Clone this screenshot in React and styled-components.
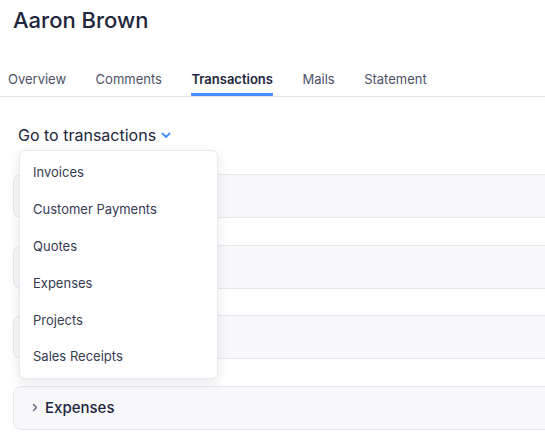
import React from "react";
import styled, { createGlobalStyle } from "styled-components";

const GlobalStyle = createGlobalStyle`
  body {
    margin: 0;
    overflow: hidden;
    background: #fff;
    font-family: Inter, "Noto Sans", sans-serif;
    color: #21263c;
  }
`;

const Page = styled.div`
  width: 545px;
  height: 440px;
  overflow: hidden;
`;

const Title = styled.h1`
  margin: 0;
  padding: 7px 13px 0;
  font-size: 22px;
  font-weight: 500;
  line-height: 26px;
  color: #21263c;
`;

const TabBar = styled.nav`
  display: flex;
  gap: 29.5px;
  margin-top: 38px;
  padding-left: 8px;
  border-bottom: 1px solid #dfe1e8;
`;

const Tab = styled.div`
  font-size: 13px;
  line-height: 16px;
  padding-bottom: 6px;
  color: ${(p) => (p.$active ? "#21263c" : "#4d5168")};
  font-weight: ${(p) => (p.$active ? 600 : 400)};
  border-bottom: 3px solid ${(p) => (p.$active ? "#408dfb" : "transparent")};
  border-radius: 1px;
`;

const Content = styled.section`
  padding: 28px 0 0 13px;
`;

const Picker = styled.div`
  position: relative;
  padding-left: 5px;
  height: 20px;
`;

const Trigger = styled.div`
  display: inline-flex;
  align-items: center;
  gap: 5px;
  font-size: 16px;
  line-height: 20px;
  color: #21263c;
`;

const Menu = styled.ul`
  position: absolute;
  top: 25px;
  left: 6px;
  z-index: 2;
  width: 199px;
  margin: 0;
  padding: 3px 0 3px;
  list-style: none;
  background: #fff;
  border: 1px solid #e9eaf0;
  border-radius: 6px;
  box-shadow: 0 4px 12px rgba(30, 34, 60, 0.1);
  box-sizing: border-box;
`;

const MenuItem = styled.li`
  height: 36.8px;
  display: flex;
  align-items: center;
  padding-left: 13px;
  font-size: 13px;
  color: #363b52;
`;

const Rows = styled.div`
  display: flex;
  flex-direction: column;
  gap: 26.5px;
  margin-top: 29px;
`;

const Row = styled.div`
  width: 560px;
  height: 44px;
  box-sizing: border-box;
  display: flex;
  align-items: center;
  gap: 7px;
  padding-left: 18px;
  background: #f9f9fb;
  border: 1px solid #e6e7ee;
  border-radius: 8px;
`;

const RowLabel = styled.span`
  font-size: 15px;
  font-weight: 500;
  color: #21263c;
`;

const ChevronDown = () => (
  <svg width="10" height="7" viewBox="0 0 10 7" fill="none">
    <path d="M1.5 1.5L5 5L8.5 1.5" stroke="#408dfb" strokeWidth="1.8" strokeLinecap="round" strokeLinejoin="round" />
  </svg>
);

const ChevronRight = () => (
  <svg width="6" height="9" viewBox="0 0 6 9" fill="none">
    <path d="M1.5 1.5L4.5 4.5L1.5 7.5" stroke="#6b6f83" strokeWidth="1.5" strokeLinecap="round" strokeLinejoin="round" />
  </svg>
);

const tabs = ["Overview", "Comments", "Transactions", "Mails", "Statement"];
const menu = ["Invoices", "Customer Payments", "Quotes", "Expenses", "Projects", "Sales Receipts"];
const sections = ["Invoices", "Customer Payments", "Quotes", "Expenses"];

export default function App() {
  return (
    <Page>
      <GlobalStyle />
      <Title>Aaron Brown</Title>
      <TabBar>
        {tabs.map((t) => (
          <Tab key={t} $active={t === "Transactions"}>
            {t}
          </Tab>
        ))}
      </TabBar>
      <Content>
        <Picker>
          <Trigger>
            Go to transactions <ChevronDown />
          </Trigger>
          <Menu>
            {menu.map((m) => (
              <MenuItem key={m}>{m}</MenuItem>
            ))}
          </Menu>
        </Picker>
        <Rows>
          {sections.map((s) => (
            <Row key={s}>
              <ChevronRight />
              <RowLabel>{s}</RowLabel>
            </Row>
          ))}
        </Rows>
      </Content>
    </Page>
  );
}
